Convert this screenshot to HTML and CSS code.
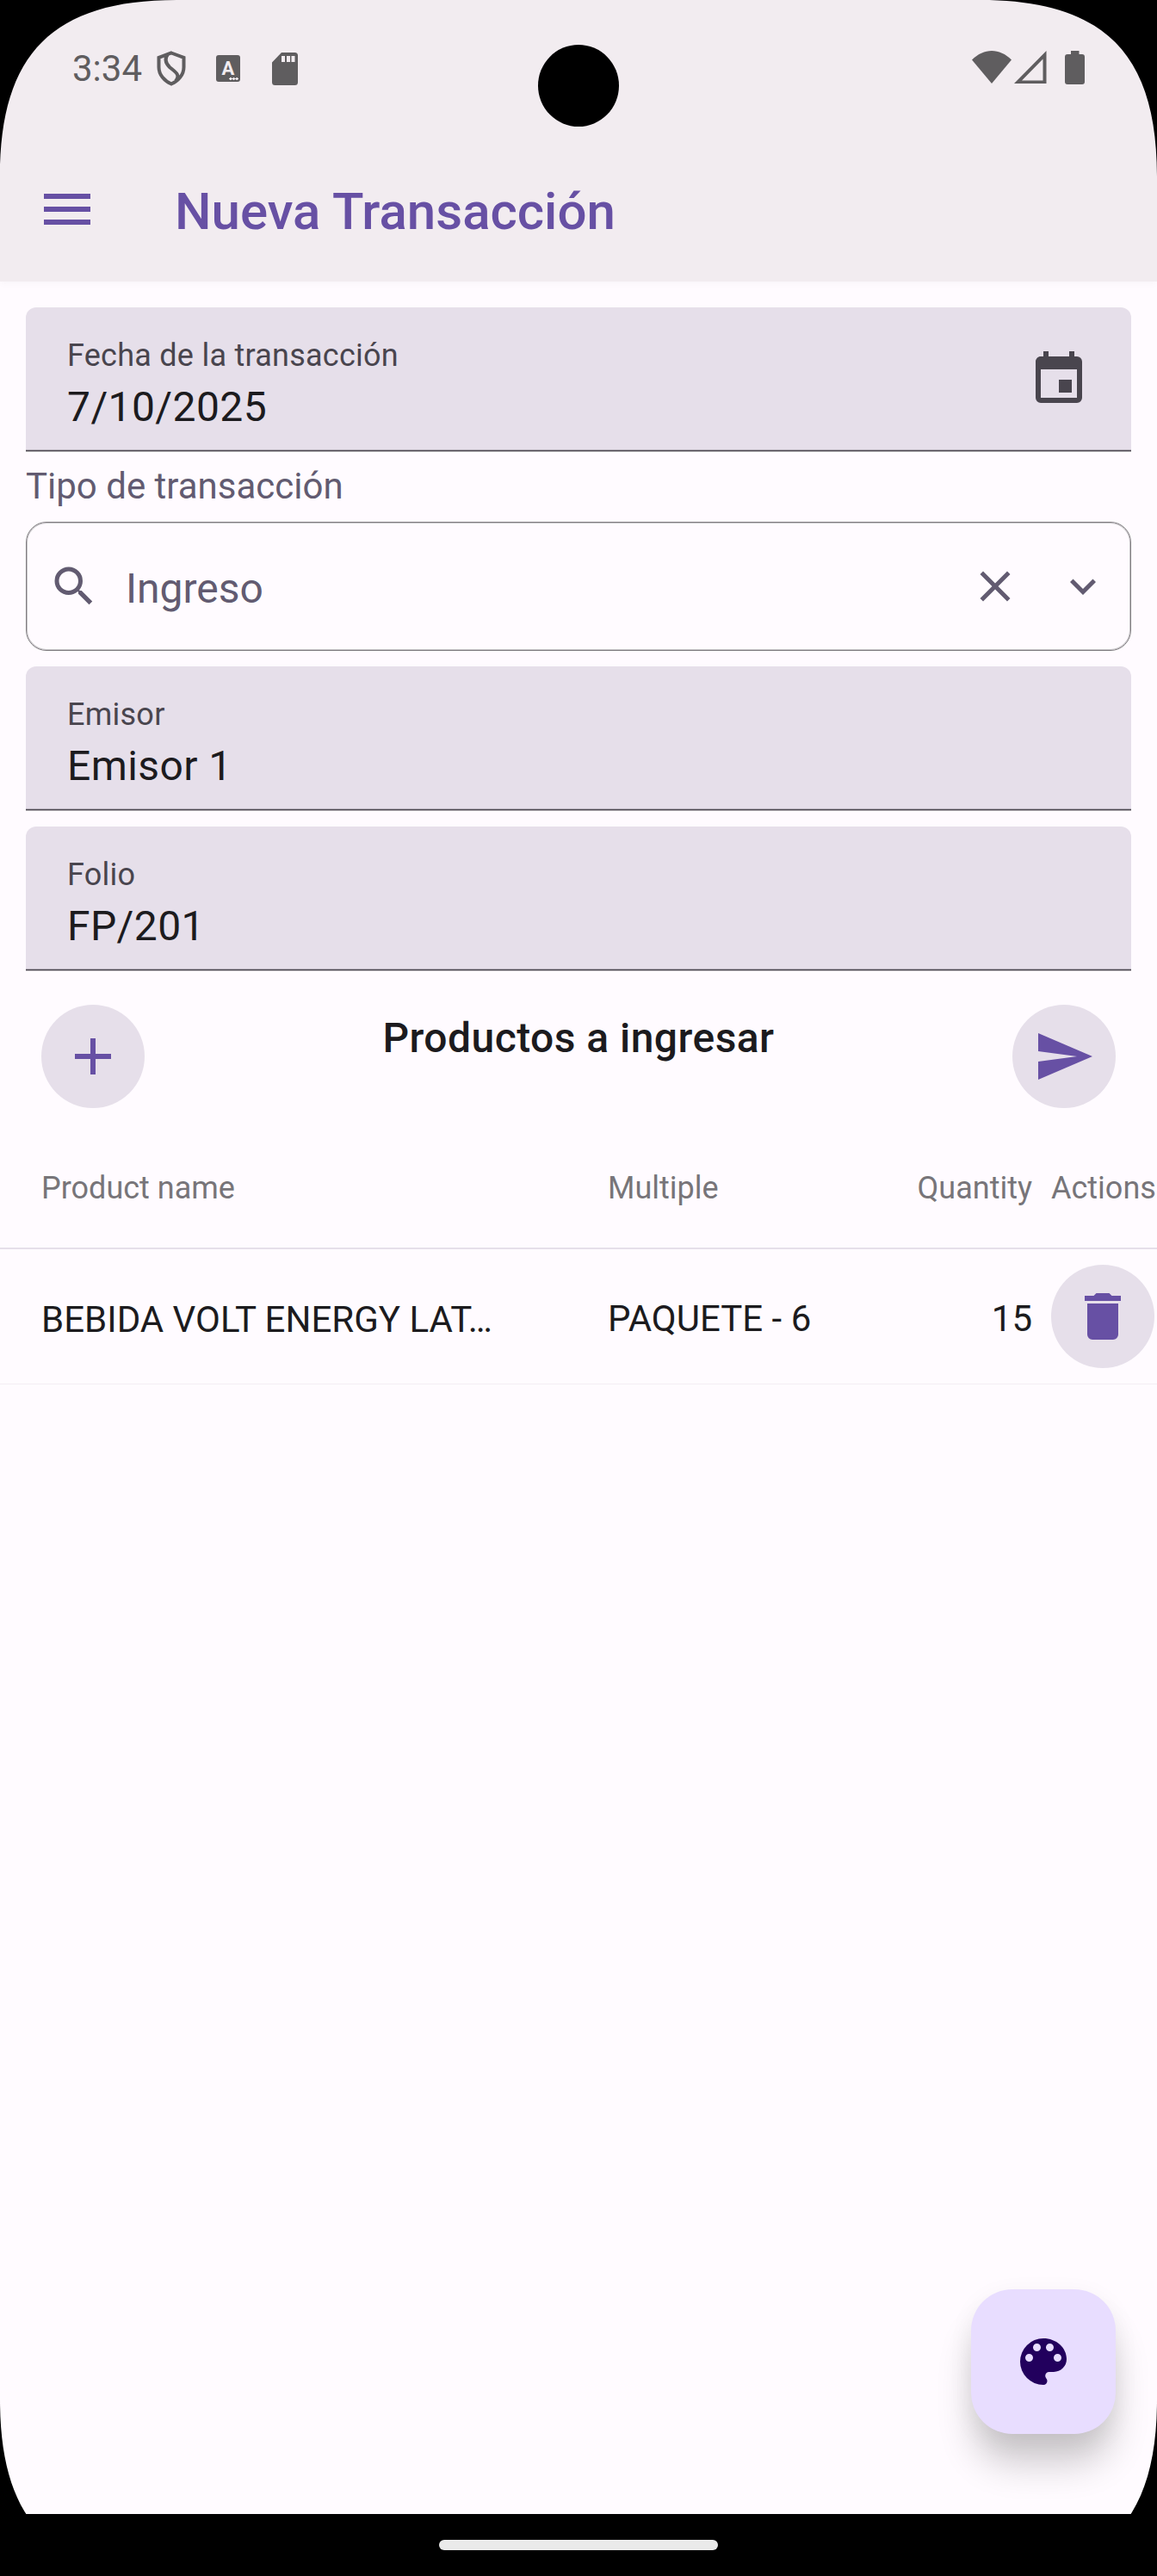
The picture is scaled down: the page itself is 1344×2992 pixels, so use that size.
FILE: index.html
```html
<!DOCTYPE html>
<html lang="es">
<head>
<meta charset="utf-8">
<title>Nueva Transacción</title>
<link rel="stylesheet" href="styles.css">
</head>
<body>
<div class="screen">
  <header class="top">
    <div class="status">
      <div class="status-left">
        <span class="clock">3:34</span>
        <svg class="st-shield" viewBox="0 0 34 42"><path d="M17 2.500L31.500 8V19C31.500 28 25 35 17 38.500C9 35 2.500 28 2.500 19V8Z M13 4C9 9 10 14 15 19C22 25 28 28 22 35" fill="none" stroke="#5f5d5f" stroke-width="4"/></svg>
        <span class="st-letter">A<i></i></span>
        <svg class="st-sd" viewBox="0 0 30 38"><path fill="#5f5d5f" fill-rule="evenodd" d="M11 0H26.500A3.500 3.500 0 0 1 30 3.500V34.500A3.500 3.500 0 0 1 26.500 38H3.500A3.500 3.500 0 0 1 0 34.500V11.500ZM11 4V11H15V4ZM17 4V11H21V4ZM22.500 4V11H26.500V4Z"/></svg>
      </div>
      <div class="status-right">
        <svg class="st-wifi" viewBox="0 0 46 38"><path fill="#5f5d5f" d="M0 10.500C14 -3.500 32 -3.500 46 10.500L23 38Z"/></svg>
        <svg class="st-cell" viewBox="0 0 38 38"><path fill="#5f5d5f" fill-rule="evenodd" d="M37.500 0V38H0ZM33.500 9.500L9 34.500H33.500Z"/></svg>
        <svg class="st-bat" viewBox="0 0 23 39"><path fill="#5f5d5f" d="M7 0H16.500V4H20A3 3 0 0 1 23 7V36A3 3 0 0 1 20 39H3A3 3 0 0 1 0 36V7A3 3 0 0 1 3 4H7Z"/></svg>
      </div>
    </div>
    <div class="appbar">
      <svg class="icon menu" viewBox="0 0 24 24"><path d="M3 6h18v2H3V6m0 5h18v2H3v-2m0 5h18v2H3v-2Z"/></svg>
      <h1>Nueva Transacción</h1>
    </div>
  </header>

  <main>
    <section class="form">
      <div class="field">
        <div class="field-text"><label>Fecha de la transacción</label><span class="value">7/10/2025</span></div>
        <svg class="icon calendar" viewBox="0 0 24 24"><path d="M19 19H5V8h14m-3-7v2H8V1H6v2H5c-1.110 0-2 .89-2 2v14a2 2 0 0 0 2 2h14a2 2 0 0 0 2-2V5a2 2 0 0 0-2-2h-1V1m-1 11h-5v5h5v-5Z"/></svg>
      </div>
      <div class="select-label">Tipo de transacción</div>
      <div class="select">
        <svg class="icon small" viewBox="0 0 24 24"><path d="M9.500 3A6.500 6.500 0 0 1 16 9.500c0 1.610-.59 3.090-1.560 4.230l.27.27h.79l5 5-1.500 1.500-5-5v-.79l-.27-.27A6.516 6.516 0 0 1 9.500 16 6.500 6.500 0 0 1 3 9.500 6.500 6.500 0 0 1 9.500 3m0 2C7 5 5 7 5 9.500S7 14 9.500 14 14 12 14 9.500 12 5 9.500 5Z"/></svg>
        <span class="select-value">Ingreso</span>
        <svg class="icon small clear" viewBox="0 0 24 24"><path d="M19 6.410 17.590 5 12 10.590 6.410 5 5 6.410 10.590 12 5 17.590 6.410 19 12 13.410 17.590 19 19 17.590 13.410 12 19 6.410Z"/></svg>
        <svg class="icon small" viewBox="0 0 24 24"><path d="M7.410 8.580 12 13.170l4.590-4.590L18 10l-6 6-6-6 1.410-1.420Z"/></svg>
      </div>
      <div class="field"><div class="field-text"><label>Emisor</label><span class="value">Emisor 1</span></div></div>
      <div class="field"><div class="field-text"><label>Folio</label><span class="value">FP/201</span></div></div>
    </section>

    <section class="actions">
      <div class="round"><svg class="icon" viewBox="0 0 24 24"><path d="M19 13h-6v6h-2v-6H5v-2h6V5h2v6h6v2Z"/></svg></div>
      <h2>Productos a ingresar</h2>
      <div class="round"><svg class="icon" viewBox="0 0 24 24"><path d="m2 21 21-9L2 3v7l15 2-15 2v7Z"/></svg></div>
    </section>

    <section class="table">
      <div class="row head">
        <span>Product name</span><span>Multiple</span><span class="num">Quantity</span><span class="act">Actions</span>
      </div>
      <div class="row item">
        <span class="name">BEBIDA VOLT ENERGY LAT…</span><span>PAQUETE - 6</span><span class="num">15</span>
        <div class="round act"><svg class="icon" viewBox="0 0 24 24"><path d="M19 4h-3.500l-1-1h-5l-1 1H5v2h14M6 19a2 2 0 0 0 2 2h8a2 2 0 0 0 2-2V7H6v12Z"/></svg></div>
      </div>
    </section>
  </main>

  <nav class="navbar"><div class="pill"></div></nav>

  <div class="fab"><svg class="icon" viewBox="0 0 24 24"><path d="M17.500 12a1.500 1.500 0 0 1-1.500-1.500A1.500 1.500 0 0 1 17.500 9a1.500 1.500 0 0 1 1.500 1.500 1.500 1.500 0 0 1-1.500 1.500m-3-4A1.500 1.500 0 0 1 13 6.500 1.500 1.500 0 0 1 14.500 5 1.500 1.500 0 0 1 16 6.500 1.500 1.500 0 0 1 14.500 8m-5 0A1.500 1.500 0 0 1 8 6.500 1.500 1.500 0 0 1 9.500 5 1.500 1.500 0 0 1 11 6.500 1.500 1.500 0 0 1 9.500 8m-3 4A1.500 1.500 0 0 1 5 10.500 1.500 1.500 0 0 1 6.500 9 1.500 1.500 0 0 1 8 10.500 1.500 1.500 0 0 1 6.500 12M12 3a9 9 0 0 0-9 9 9 9 0 0 0 9 9 1.500 1.500 0 0 0 1.500-1.500c0-.39-.15-.74-.39-1-.23-.27-.38-.62-.38-1a1.500 1.500 0 0 1 1.500-1.500H16a5 5 0 0 0 5-5c0-4.420-4.030-8-9-8Z"/></svg></div>
  <div class="camera"></div>
  <svg class="corner tl" viewBox="0 0 205 205"><path d="M0 0H205C62 0 0 62 0 205Z"/></svg>
  <svg class="corner tr" viewBox="0 0 205 205"><path d="M0 0H205C62 0 0 62 0 205Z"/></svg>
  <svg class="corner bl" viewBox="0 0 205 205"><path d="M0 0H205C62 0 0 62 0 205Z"/></svg>
  <svg class="corner br" viewBox="0 0 205 205"><path d="M0 0H205C62 0 0 62 0 205Z"/></svg>
</div>
</body>
</html>
```
FILE: styles.css
```css
* { box-sizing: border-box; }
body { margin: 0; background: #000; font-family: Roboto, "Noto Sans", sans-serif; }
.screen {
  position: relative;
  display: flex;
  flex-direction: column;
  width: 1344px;
  height: 2992px;
  overflow: hidden;
  background: #fffbff;
  color: #1c1b1e;
}
.icon { display: block; flex: none; width: 72px; height: 72px; fill: currentColor; }
.icon.small { width: 60px; height: 60px; }

.top { height: 327px; background: #f2ecf0; box-shadow: 0 2px 8px rgba(0, 0, 0, .03); }
.status { display: flex; justify-content: space-between; height: 156px; padding: 0 84px; color: #5f5d5f; }
.status-left, .status-right { display: flex; align-items: flex-start; }
.clock { width: 98px; margin-top: 55px; font-size: 42px; line-height: 50px; }
.st-shield { width: 34px; height: 42px; margin-top: 59px; }
.st-letter {
  position: relative;
  width: 28px;
  height: 31px;
  margin: 64px 0 0 35px;
  border-radius: 3px;
  background: #5f5d5f;
  color: #f2ecf0;
  font-size: 22px;
  font-weight: 700;
  line-height: 32px;
  text-align: center;
}
.st-letter i {
  position: absolute;
  right: 2px;
  bottom: 2px;
  width: 11px;
  height: 3px;
  background: radial-gradient(circle, #f2ecf0 1.4px, transparent 1.6px) 0 0 / 3.7px 3px;
}
.st-sd { width: 30px; height: 38px; margin: 61px 0 0 37px; }
.st-wifi { width: 46px; height: 38px; margin-top: 59px; }
.st-cell { width: 38px; height: 38px; margin: 59px 0 0 3px; }
.st-bat { width: 23px; height: 39px; margin: 59px 0 0 21px; }

.appbar { display: flex; height: 171px; padding: 51px 42px 0; color: #6750a4; }
.appbar h1 { margin: 3px 0 0 89px; font-size: 60px; line-height: 72px; font-weight: 500; }

.form { display: flex; flex-direction: column; gap: 18px; padding: 30px 30px 0; }
.field {
  display: flex;
  justify-content: space-between;
  height: 168px;
  padding: 0 48px;
  border-radius: 12px 12px 0 0;
  background: linear-gradient(to bottom, #e6dfea 165px, #b3adb7 165px 166px, #49454e 166px 167px, #b4b0b5 167px);
}
.field-text { display: flex; flex-direction: column; }
.field label { margin-top: 32px; color: #49454e; font-size: 36px; line-height: 48px; letter-spacing: .25px; }
.value { margin-top: 8px; font-size: 48px; line-height: 56px; letter-spacing: .4px; }
.calendar { margin-top: 48px; color: #49454e; }
.select-label { height: 45px; color: #625b71; font-size: 42px; line-height: 43px; }
.select {
  display: flex;
  align-items: center;
  height: 150px;
  padding: 0 25px;
  border: 1px solid #7f7d80;
  box-shadow: inset 0 0 0 1px #c3c0c4;
  border-radius: 24px;
  color: #625b71;
}
.select-value { flex: 1; margin-left: 30px; padding-top: 5px; font-size: 48px; line-height: 56px; }
.clear { margin-right: 42px; }

.actions { display: flex; justify-content: space-between; padding: 39px 48px 0; }
.round {
  display: flex;
  flex: none;
  align-items: center;
  justify-content: center;
  width: 120px;
  height: 120px;
  border-radius: 50%;
  background: #e6dfea;
  color: #6750a4;
}
.actions h2 { margin: 3px 0 0; font-size: 48px; line-height: 72px; font-weight: 500; letter-spacing: .45px; }

.row {
  display: grid;
  grid-template-columns: 658px 250px 243px 145px;
  align-items: center;
  padding-left: 48px;
}
.row.head { height: 146px; margin-top: 18px; padding-top: 5px; border-bottom: 2px solid #e6dfea; color: #777579; font-size: 36px; line-height: 48px; }
.row.item { height: 157px; border-bottom: 1px solid #f3edf4; font-size: 42px; line-height: 50px; }
.row.item span { padding-top: 5px; }
.row.item .name { padding-top: 7px; }
.num { text-align: right; }
.act { margin-left: 22px; }

.navbar { display: flex; justify-content: center; align-items: center; height: 72px; margin-top: auto; background: #000; }
.pill { width: 324px; height: 12px; border-radius: 6px; background: #eaeaea; }

.fab {
  position: absolute;
  left: 1128px;
  top: 2659px;
  display: flex;
  align-items: center;
  justify-content: center;
  width: 168px;
  height: 168px;
  border-radius: 48px;
  background: #e8ddff;
  color: #22005d;
  box-shadow: 0 38px 44px -4px rgba(0, 0, 0, .2), 0 8px 30px rgba(0, 0, 0, .06);
}
.camera { position: absolute; left: 625px; top: 52px; width: 94px; height: 95px; border-radius: 50%; background: #000; }
.corner { position: absolute; width: 205px; height: 205px; }
.tl { left: 0; top: 0; }
.tr { right: 0; top: 0; transform: scaleX(-1); }
.bl { left: 0; bottom: 0; transform: scaleY(-1); }
.br { right: 0; bottom: 0; transform: scale(-1); }
```
